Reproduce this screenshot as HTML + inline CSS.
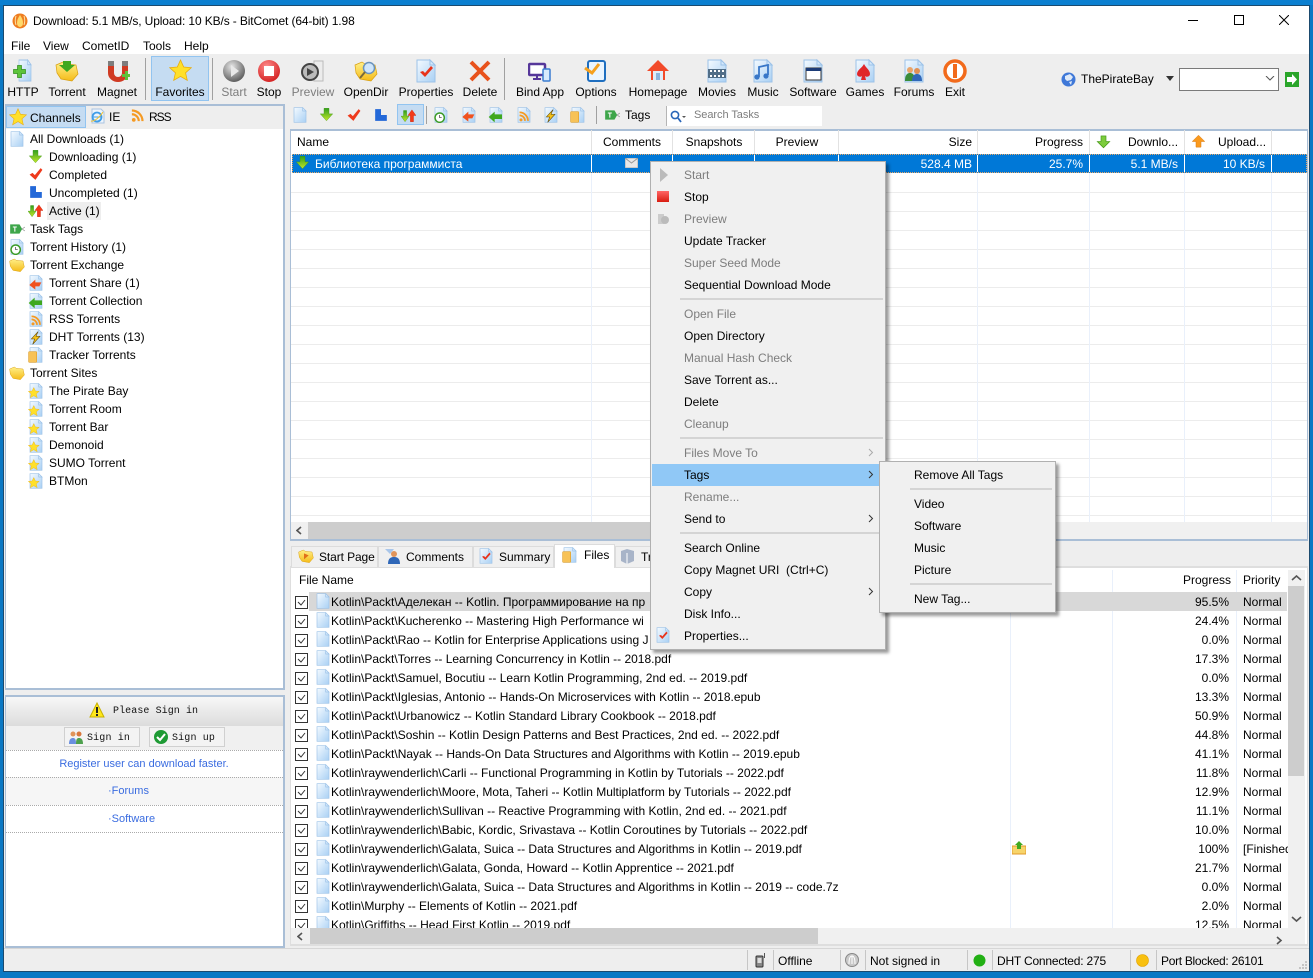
<!DOCTYPE html>
<html><head><meta charset="utf-8"><title>BitComet</title>
<style>
html,body{margin:0;padding:0;width:1313px;height:978px;overflow:hidden;background:#0a78c4;font:12px/16px "Liberation Sans","Noto Sans CJK SC",sans-serif;color:#000}
div,span,svg{box-sizing:border-box}
.a,.t,.c,.r,svg.i{position:absolute}
.t{white-space:nowrap}
.c{white-space:nowrap;transform:translateX(-50%)}
.r{white-space:nowrap;transform:translateX(-100%)}
.g{color:#7d7d7d}
.sp{position:absolute;background:#a0a0a0;width:1px}
.vl{position:absolute;width:1px;background:#e9f0fb}
.hd{position:absolute;width:1px;background:#e2e2e2;top:130px;height:25px}
.mi{position:absolute;left:34px;white-space:nowrap;line-height:16px}
.mg{color:#7d7d7d}
.ms{position:absolute;height:2px;background:#d4d4d4}
.row{position:relative;height:19px;white-space:nowrap;line-height:19px}
.row .n{position:absolute;left:41px;top:1px}
.row .p{position:absolute;right:59px;top:1px}
.row .q{position:absolute;left:953px;top:1px;width:45px;overflow:hidden}
.row svg{position:absolute}
.row .cb{left:5px;top:4px;width:13px;height:13px}
.row .dc{left:25px;top:1px;width:16px;height:16px}
.tb{position:absolute;top:546px;height:21px;background:#f0f0f0;border:1px solid #dcdcdc;border-bottom:0}
.mono{font:10px/16px "Liberation Mono","WenQuanYi Zen Hei",monospace;color:#111}
.lk{color:#3a6ce0;font-size:11px}
</style></head><body>
<svg width="0" height="0" style="position:absolute"><defs>
<linearGradient id="pg" x1="0" y1="0" x2="1" y2="1"><stop offset="0" stop-color="#f4faff"/><stop offset="1" stop-color="#a9d0f4"/></linearGradient>
<linearGradient id="fo" x1="0" y1="0" x2="0" y2="1"><stop offset="0" stop-color="#fff08a"/><stop offset="1" stop-color="#f5bb18"/></linearGradient>
<linearGradient id="gn" x1="0" y1="0" x2="0" y2="1"><stop offset="0" stop-color="#2f9e1e"/><stop offset="1" stop-color="#c4e826"/></linearGradient>
<radialGradient id="gb" cx=".4" cy=".3" r=".8"><stop offset="0" stop-color="#e5e5e5"/><stop offset="1" stop-color="#4c4c4c"/></radialGradient>
<radialGradient id="rb" cx=".4" cy=".3" r=".8"><stop offset="0" stop-color="#ff8d8d"/><stop offset="1" stop-color="#cf1414"/></radialGradient>
<symbol id="cb" viewBox="0 0 13 13"><rect x=".5" y=".5" width="12" height="12" fill="#fff" stroke="#333"/><path d="M3 6l3 3 4-5" stroke="#333" fill="none"/></symbol>
<symbol id="doc" viewBox="0 0 24 24"><path d="M3 1h13l5 5v17H3z" fill="url(#pg)" stroke="#9cc2e8"/><path d="M16 1v5h5z" fill="#d4e8fb" stroke="#9cc2e8"/></symbol>
<symbol id="dn" viewBox="0 0 24 24"><path d="M8 2h8v9h6L12 22 2 11h6z" fill="url(#gn)" stroke="#3f9410" stroke-width=".6"/></symbol>
<symbol id="up" viewBox="0 0 24 24"><path d="M8 21h8v-9h6L12 2 2 12h6z" fill="#f33a1a" stroke="#c7230c" stroke-width=".8"/></symbol>
<symbol id="upo" viewBox="0 0 24 24"><path d="M8 21h8v-9h6L12 2 2 12h6z" fill="#fa9a1e" stroke="#d97708" stroke-width=".8"/></symbol>
<symbol id="du" viewBox="0 0 24 24"><path d="M4 4h5v9h4L6.500 22 0 13h4z" fill="url(#gn)" stroke="#3f9410" stroke-width=".6"/><path d="M15 22h5v-10h4L17.500 3 11 12h4z" fill="#f33a1a" stroke="#c7230c" stroke-width=".6"/></symbol>
<symbol id="chk" viewBox="0 0 24 24"><path d="M1 13l5-3 4 4L20 2l3 3-12 17z" fill="#ee3a1c"/></symbol>
<symbol id="blk" viewBox="0 0 24 24"><path d="M2 2h10v10h10v10H2z" fill="#2368d8"/></symbol>
<symbol id="star" viewBox="0 0 24 24"><path d="M12 1l3.300 7.300 8 .8-6 5.300 1.800 7.900L12 18.200 4.900 22.300l1.800-7.900-6-5.300 8-.8z" fill="#ffe02a" stroke="#e8ac10" stroke-width=".8"/></symbol>
<symbol id="fold" viewBox="0 0 24 24"><path d="M1 6l7-3 3 2 10 1 2 9-6 7-11-2-4-6z" fill="url(#fo)" stroke="#d9a012" stroke-width=".7"/></symbol>
<symbol id="clk" viewBox="0 0 24 24"><use href="#doc"/><circle cx="10" cy="16" r="7" fill="#fff" stroke="#3a9a25" stroke-width="2.200"/><path d="M10 12v4h3" stroke="#333" fill="none"/></symbol>
<symbol id="rss" viewBox="0 0 24 24"><circle cx="6" cy="19" r="3" fill="#f59a23"/><path d="M3 10a11 11 0 0 1 11 11M3 4a17 17 0 0 1 17 17" fill="none" stroke="#f59a23" stroke-width="3.500"/></symbol>
<symbol id="tag" viewBox="0 0 24 24"><path d="M1 5h14l4 7-4 7H1z" fill="#3ea64a"/><path d="M5 9h6M8 9v7" stroke="#fff" stroke-width="1.600"/><path d="M19 12l4-3M19 12l4 3" stroke="#888"/></symbol>
<symbol id="dshare" viewBox="0 0 24 24"><use href="#doc"/><path d="M2 15l9-8v4h9l-3 6h-6v5z" fill="#f0521f"/></symbol>
<symbol id="dcoll" viewBox="0 0 24 24"><use href="#doc"/><path d="M1 15l9-8v4h11v7H10v5z" fill="#3fa81f"/></symbol>
<symbol id="drss" viewBox="0 0 24 24"><use href="#doc"/><g transform="translate(3,5) scale(.75)"><use href="#rss"/></g></symbol>
<symbol id="dbolt" viewBox="0 0 24 24"><use href="#doc"/><path d="M15 4L5 15h5l-3 8 11-12h-6z" fill="#f5c218" stroke="#5a4306" stroke-width=".8"/></symbol>
<symbol id="dfold" viewBox="0 0 24 24"><use href="#doc"/><rect x="1" y="7" width="12" height="16" rx="1" fill="#f7c257" stroke="#dfa02e"/></symbol>
<symbol id="dstar" viewBox="0 0 24 24"><use href="#doc"/><g transform="translate(0,6) scale(.72)"><use href="#star"/></g></symbol>
<symbol id="dprop" viewBox="0 0 24 24"><use href="#doc"/><path d="M6 13l3-1 2 2 6-7 2 2-8 9z" fill="#e8341c"/></symbol>
</defs></svg>

<!-- desktop / window -->
<div class="a" style="left:0;top:0;width:1313px;height:5px;background:#0b7fd0"></div>
<div class="a" style="left:3px;top:5px;width:1307px;height:967px;background:#eee;border:1px solid #1b4a6e"></div>
<div class="a" style="left:4px;top:6px;width:1305px;height:48px;background:#fff"></div>

<!-- title bar -->
<svg class="i" style="left:12px;top:13px" width="16" height="16" viewBox="0 0 16 16"><circle cx="8" cy="8" r="7.500" fill="#ef7d1f"/><path d="M8 2c2 3 3 5 3 8s-2 4-3 4-3-1-3-4 1-5 3-8z" fill="#ffd96a"/><path d="M4 3c-1 3-1 6 0 9M12 3c1 3 1 6 0 9" stroke="#f9e3a8" fill="none"/></svg>
<span class="t" style="left:33px;top:13px;letter-spacing:-.12px">Download: 5.1 MB/s, Upload: 10 KB/s - BitComet (64-bit) 1.98</span>
<div class="a" style="left:1188px;top:20px;width:10px;height:1px;background:#000"></div>
<div class="a" style="left:1234px;top:15px;width:10px;height:10px;border:1px solid #000"></div>
<svg class="i" style="left:1279px;top:15px" width="10" height="10" viewBox="0 0 10 10"><path d="M0 0l10 10M10 0L0 10" stroke="#000"/></svg>

<!-- menu -->
<span class="t" style="left:11px;top:38px">File</span>
<span class="t" style="left:43px;top:38px">View</span>
<span class="t" style="left:82px;top:38px">CometID</span>
<span class="t" style="left:143px;top:38px">Tools</span>
<span class="t" style="left:184px;top:38px">Help</span>

<!-- toolbar -->
<div class="a" style="left:151px;top:56px;width:58px;height:45px;background:#c5dcf2;border:1px solid #92c4f0"></div>
<div class="sp" style="left:145px;top:58px;height:42px"></div>
<div class="sp" style="left:212px;top:58px;height:42px"></div>
<div class="sp" style="left:504px;top:58px;height:42px"></div>

<svg class="i" style="left:17px;top:59px" width="16" height="23" viewBox="0 0 24 24" preserveAspectRatio="none"><use href="#doc"/></svg>
<svg class="i" style="left:13px;top:65px" width="13" height="13" viewBox="0 0 13 13"><path d="M4.500 .5h4v4h4v4h-4v4h-4v-4h-4v-4h4z" fill="#5cc33a" stroke="#2f8d1c" stroke-width=".7"/></svg>
<svg class="i" style="left:55px;top:59px" width="24" height="24" viewBox="0 0 24 24"><use href="#fold"/><path d="M8 2h8v4h4l-8 7-8-7h4z" fill="#3fa81f"/></svg>
<svg class="i" style="left:106px;top:59px" width="24" height="24" viewBox="0 0 24 24"><path d="M2 3h6v11a4 4 0 0 0 8 0V3h6v11a10 9 0 0 1-20 0z" fill="#d03a22"/><path d="M2 2h6v5H2zM16 2h6v5h-6z" fill="#7d7d7d"/><path d="M16 15h3v-3h3v3h2v3h-2v3h-3v-3h-3z" fill="#5cc33a"/></svg>
<svg class="i" style="left:169px;top:59px" width="23" height="23"><use href="#star"/></svg>
<svg class="i" style="left:222px;top:59px" width="24" height="24" viewBox="0 0 24 24"><circle cx="12" cy="12" r="11" fill="url(#gb)"/><path d="M9 6l8 6-8 6z" fill="#e8e8e8"/></svg>
<svg class="i" style="left:257px;top:59px" width="24" height="24" viewBox="0 0 24 24"><circle cx="12" cy="12" r="11" fill="url(#rb)"/><rect x="7" y="7" width="10" height="10" fill="#fff"/></svg>
<svg class="i" style="left:301px;top:59px" width="24" height="24" viewBox="0 0 24 24"><path d="M13 2h9v20h-9z" fill="#ececec" stroke="#bbb"/><circle cx="9" cy="13" r="8" fill="#bbb" stroke="#444" stroke-width="2"/><path d="M6 9l7 4-7 4z" fill="#444"/></svg>
<svg class="i" style="left:354px;top:59px" width="24" height="24" viewBox="0 0 24 24"><use href="#fold"/><circle cx="15" cy="9" r="5.500" fill="#cfe6fb" stroke="#6a93bd" stroke-width="1.500"/><path d="M11 13l-5 6" stroke="#7a6a3a" stroke-width="2"/></svg>
<svg class="i" style="left:414px;top:59px" width="24" height="24"><use href="#dprop"/></svg>
<svg class="i" style="left:468px;top:59px" width="24" height="24" viewBox="0 0 24 24"><path d="M3 3l18 18M21 3L3 21" stroke="#e8521c" stroke-width="4"/></svg>
<svg class="i" style="left:528px;top:62px" width="24" height="20" viewBox="0 0 24 20"><rect x="1" y="2" width="16" height="11" rx="1" fill="#fff" stroke="#56379a" stroke-width="2.500"/><path d="M5 17h8M9 13v4" stroke="#56379a" stroke-width="2"/><rect x="15" y="7" width="7" height="12" rx="1" fill="#d6eafc" stroke="#3a7cd0" stroke-width="1.500"/></svg>
<svg class="i" style="left:584px;top:59px" width="24" height="24" viewBox="0 0 24 24"><rect x="4" y="2" width="17" height="20" rx="2" fill="#eaf5ff" stroke="#1f6fc0" stroke-width="2"/><path d="M1 9l7 5 7-9" fill="none" stroke="#f5a11f" stroke-width="3"/></svg>
<svg class="i" style="left:646px;top:58px" width="24" height="24" viewBox="0 0 24 24"><path d="M12 2L1 13h4v9h14v-9h4z" fill="#f24a2a"/><path d="M7 13h10v9H7z" fill="#dfecf9"/><path d="M10 15h4v7h-4z" fill="#8bb4de"/></svg>
<svg class="i" style="left:705px;top:59px" width="24" height="24"><use href="#doc"/><rect x="3" y="10" width="18" height="9" fill="#516e88"/><path d="M5 11h2v2H5zM9 11h2v2H9zM13 11h2v2h-2zM17 11h2v2h-2zM5 16h2v2H5zM9 16h2v2H9zM13 16h2v2h-2zM17 16h2v2h-2z" fill="#fff"/></svg>
<svg class="i" style="left:751px;top:59px" width="24" height="24"><use href="#doc"/><path d="M8 18V8l9-2v10" fill="none" stroke="#3877c8" stroke-width="1.800"/><circle cx="6" cy="18" r="2.600" fill="#3877c8"/><circle cx="15" cy="17" r="2.600" fill="#3877c8"/></svg>
<svg class="i" style="left:801px;top:59px" width="24" height="24"><use href="#doc"/><rect x="5" y="9" width="15" height="12" fill="#fff" stroke="#333"/><rect x="5" y="9" width="15" height="3" fill="#1c3c78"/></svg>
<svg class="i" style="left:853px;top:59px" width="24" height="24"><use href="#doc"/><path d="M11 5c2 4 6 6 6 10a3 3 0 0 1-5 2l1 4h-5l1-4a3 3 0 0 1-5-2c0-4 5-6 7-10z" fill="#e0262a"/></svg>
<svg class="i" style="left:902px;top:59px" width="24" height="24"><use href="#doc"/><circle cx="8" cy="11" r="3" fill="#e9a56a"/><path d="M3 22c0-7 3-8 5-8s5 1 5 8z" fill="#3a8c3a"/><circle cx="15" cy="12" r="3" fill="#e09055"/><path d="M10 22c0-6 3-7 5-7s5 1 5 7z" fill="#2f67b8"/></svg>
<svg class="i" style="left:943px;top:59px" width="24" height="24" viewBox="0 0 24 24"><circle cx="12" cy="12" r="10" fill="#fff" stroke="#f26a1b" stroke-width="3.500"/><rect x="10" y="5" width="4" height="14" fill="#f26a1b"/></svg>

<span class="c" style="left:23px;top:84px">HTTP</span>
<span class="c" style="left:67px;top:84px">Torrent</span>
<span class="c" style="left:117px;top:84px">Magnet</span>
<span class="c" style="left:180px;top:84px">Favorites</span>
<span class="c g" style="left:234px;top:84px">Start</span>
<span class="c" style="left:269px;top:84px">Stop</span>
<span class="c g" style="left:313px;top:84px">Preview</span>
<span class="c" style="left:366px;top:84px">OpenDir</span>
<span class="c" style="left:426px;top:84px">Properties</span>
<span class="c" style="left:480px;top:84px">Delete</span>
<span class="c" style="left:540px;top:84px">Bind App</span>
<span class="c" style="left:596px;top:84px">Options</span>
<span class="c" style="left:658px;top:84px">Homepage</span>
<span class="c" style="left:717px;top:84px">Movies</span>
<span class="c" style="left:763px;top:84px">Music</span>
<span class="c" style="left:813px;top:84px">Software</span>
<span class="c" style="left:865px;top:84px">Games</span>
<span class="c" style="left:914px;top:84px">Forums</span>
<span class="c" style="left:955px;top:84px">Exit</span>

<svg class="i" style="left:1061px;top:72px" width="15" height="15" viewBox="0 0 15 15"><circle cx="7.500" cy="7.500" r="7" fill="#3f78d8"/><path d="M4 4l5-2 3 3-2 3-4 1-2-2zM8 10l3-1-1 4z" fill="#dfeaf8"/></svg>
<span class="t" style="left:1081px;top:71px">ThePirateBay</span>
<svg class="i" style="left:1166px;top:76px" width="9" height="6"><path d="M0 0h8L4 5z" fill="#333"/></svg>
<div class="a" style="left:1179px;top:68px;width:100px;height:23px;background:#fff;border:1px solid #7a7a7a"></div>
<svg class="i" style="left:1265px;top:76px" width="10" height="6"><path d="M1 0l4 4 4-4" stroke="#555" fill="none"/></svg>
<svg class="i" style="left:1285px;top:72px" width="14" height="15" viewBox="0 0 14 15"><rect width="14" height="15" fill="#2aa52a"/><path d="M2 5h5V2l5 5.500L7 13v-3H2z" fill="#fff"/></svg>

<!-- second toolbar -->
<div class="a" style="left:397px;top:104px;width:27px;height:21px;background:#c5dcf2;border:1px solid #92c4f0"></div>
<svg class="i" style="left:292px;top:107px" width="16" height="16"><use href="#doc"/></svg>
<svg class="i" style="left:319px;top:107px" width="15" height="15" viewBox="0 0 24 24"><use href="#dn"/></svg>
<svg class="i" style="left:347px;top:108px" width="14" height="14" viewBox="0 0 24 24"><use href="#chk"/></svg>
<svg class="i" style="left:374px;top:108px" width="14" height="14" viewBox="0 0 24 24"><use href="#blk"/></svg>
<svg class="i" style="left:401px;top:108px" width="15" height="15" viewBox="0 0 24 24"><use href="#du"/></svg>
<div class="sp" style="left:426px;top:106px;height:18px"></div>
<svg class="i" style="left:433px;top:107px" width="16" height="16" viewBox="0 0 24 24"><use href="#clk"/></svg>
<svg class="i" style="left:461px;top:107px" width="16" height="16" viewBox="0 0 24 24"><use href="#dshare"/></svg>
<svg class="i" style="left:488px;top:107px" width="16" height="16" viewBox="0 0 24 24"><use href="#dcoll"/></svg>
<svg class="i" style="left:516px;top:107px" width="16" height="16" viewBox="0 0 24 24"><use href="#drss"/></svg>
<svg class="i" style="left:543px;top:107px" width="16" height="16" viewBox="0 0 24 24"><use href="#dbolt"/></svg>
<svg class="i" style="left:570px;top:107px" width="16" height="16" viewBox="0 0 24 24"><use href="#dfold"/></svg>
<div class="sp" style="left:596px;top:106px;height:18px"></div>
<svg class="i" style="left:604px;top:107px" width="17" height="16" viewBox="0 0 24 24"><use href="#tag"/></svg>
<span class="t" style="left:625px;top:107px">Tags</span>
<div class="a" style="left:666px;top:106px;width:156px;height:20px;background:#fff;border-left:1px solid #b5b5b5"></div>
<svg class="i" style="left:670px;top:110px" width="16" height="14" viewBox="0 0 16 14"><circle cx="5" cy="5" r="3.600" fill="none" stroke="#2a66b8" stroke-width="1.600"/><path d="M8 8l3 4" stroke="#2a66b8" stroke-width="1.800"/><path d="M12 6h4l-2 2z" fill="#555"/></svg>
<span class="t g" style="left:694px;top:107px;font-size:11px;letter-spacing:-.05px">Search Tasks</span>

<!-- left channels panel -->
<div class="a" style="left:5px;top:104px;width:280px;height:586px;background:#fff;border:2px solid #a9bed6;border-left-width:1px"></div>
<div class="a" style="left:6px;top:106px;width:277px;height:23px;background:#eee"></div>
<div class="a" style="left:6px;top:106px;width:80px;height:22px;background:#c5dcf2;border:1px solid #92c4f0"></div>
<svg class="i" style="left:9px;top:108px" width="18" height="18"><use href="#star"/></svg>
<span class="t" style="left:30px;top:110px">Channels</span>
<svg class="i" style="left:90px;top:108px" width="16" height="16" viewBox="0 0 16 16"><path d="M2 1h9l3 3v11H2z" fill="#eef5fc" stroke="#a9c4e2"/><circle cx="7" cy="9" r="4.500" fill="none" stroke="#3f9de8" stroke-width="1.800"/><path d="M3 9h8" stroke="#3f9de8"/><path d="M1 13c3 1 9-4 12-9" stroke="#f2c230" fill="none"/></svg>
<span class="t" style="left:109px;top:109px">IE</span>
<svg class="i" style="left:130px;top:108px" width="15" height="15" viewBox="0 0 24 24"><use href="#rss"/></svg>
<span class="t" style="left:149px;top:109px;letter-spacing:-1px">RSS</span>

<svg class="i" style="left:9px;top:131px" width="16" height="16" viewBox="0 0 24 24"><use href="#doc"/></svg><span class="t" style="left:30px;top:131px">All Downloads (1)</span>
<svg class="i" style="left:28px;top:149px" width="15" height="15" viewBox="0 0 24 24"><use href="#dn"/></svg><span class="t" style="left:49px;top:149px">Downloading (1)</span>
<svg class="i" style="left:29px;top:167px" width="14" height="14" viewBox="0 0 24 24"><use href="#chk"/></svg><span class="t" style="left:49px;top:167px">Completed</span>
<svg class="i" style="left:29px;top:185px" width="14" height="14" viewBox="0 0 24 24"><use href="#blk"/></svg><span class="t" style="left:49px;top:185px">Uncompleted (1)</span>
<div class="a" style="left:47px;top:202px;width:54px;height:18px;background:#eeeeee"></div>
<svg class="i" style="left:28px;top:203px" width="15" height="15" viewBox="0 0 24 24"><use href="#du"/></svg><span class="t" style="left:49px;top:203px">Active (1)</span>
<svg class="i" style="left:9px;top:221px" width="17" height="16" viewBox="0 0 24 24"><use href="#tag"/></svg><span class="t" style="left:30px;top:221px">Task Tags</span>
<svg class="i" style="left:9px;top:239px" width="16" height="16" viewBox="0 0 24 24"><use href="#clk"/></svg><span class="t" style="left:30px;top:239px">Torrent History (1)</span>
<svg class="i" style="left:9px;top:257px" width="16" height="16" viewBox="0 0 24 24"><use href="#fold"/></svg><span class="t" style="left:30px;top:257px">Torrent Exchange</span>
<svg class="i" style="left:28px;top:275px" width="16" height="16" viewBox="0 0 24 24"><use href="#dshare"/></svg><span class="t" style="left:49px;top:275px">Torrent Share (1)</span>
<svg class="i" style="left:28px;top:293px" width="16" height="16" viewBox="0 0 24 24"><use href="#dcoll"/></svg><span class="t" style="left:49px;top:293px">Torrent Collection</span>
<svg class="i" style="left:28px;top:311px" width="16" height="16" viewBox="0 0 24 24"><use href="#drss"/></svg><span class="t" style="left:49px;top:311px">RSS Torrents</span>
<svg class="i" style="left:28px;top:329px" width="16" height="16" viewBox="0 0 24 24"><use href="#dbolt"/></svg><span class="t" style="left:49px;top:329px">DHT Torrents (13)</span>
<svg class="i" style="left:28px;top:347px" width="16" height="16" viewBox="0 0 24 24"><use href="#dfold"/></svg><span class="t" style="left:49px;top:347px">Tracker Torrents</span>
<svg class="i" style="left:9px;top:365px" width="16" height="16" viewBox="0 0 24 24"><use href="#fold"/></svg><span class="t" style="left:30px;top:365px">Torrent Sites</span>
<svg class="i" style="left:28px;top:383px" width="16" height="16" viewBox="0 0 24 24"><use href="#dstar"/></svg><span class="t" style="left:49px;top:383px">The Pirate Bay</span>
<svg class="i" style="left:28px;top:401px" width="16" height="16" viewBox="0 0 24 24"><use href="#dstar"/></svg><span class="t" style="left:49px;top:401px">Torrent Room</span>
<svg class="i" style="left:28px;top:419px" width="16" height="16" viewBox="0 0 24 24"><use href="#dstar"/></svg><span class="t" style="left:49px;top:419px">Torrent Bar</span>
<svg class="i" style="left:28px;top:437px" width="16" height="16" viewBox="0 0 24 24"><use href="#dstar"/></svg><span class="t" style="left:49px;top:437px">Demonoid</span>
<svg class="i" style="left:28px;top:455px" width="16" height="16" viewBox="0 0 24 24"><use href="#dstar"/></svg><span class="t" style="left:49px;top:455px">SUMO Torrent</span>
<svg class="i" style="left:28px;top:473px" width="16" height="16" viewBox="0 0 24 24"><use href="#dstar"/></svg><span class="t" style="left:49px;top:473px">BTMon</span>

<!-- sign in panel -->
<div class="a" style="left:5px;top:695px;width:280px;height:253px;background:#fff;border:2px solid #a9bed6;border-left-width:1px"></div>
<div class="a" style="left:6px;top:697px;width:277px;height:29px;background:linear-gradient(#f7f7f7,#dcdcdc)"></div>
<div class="a" style="left:6px;top:726px;width:277px;height:24px;background:#f0f0f0"></div>
<svg class="i" style="left:89px;top:702px" width="16" height="16" viewBox="0 0 16 16"><path d="M8 1l7 14H1z" fill="#ffe81a" stroke="#c7b000"/><path d="M7 5h2v6H7zM7 12h2v2H7z" fill="#222"/></svg>
<span class="t mono" style="left:113px;top:704px;letter-spacing:.08px">Please Sign in</span>
<div class="a" style="left:64px;top:727px;width:76px;height:20px;background:#f3f3f3;border:1px solid #d0d0d0"></div>
<div class="a" style="left:149px;top:727px;width:76px;height:20px;background:#f3f3f3;border:1px solid #d0d0d0"></div>
<svg class="i" style="left:69px;top:731px" width="14" height="13" viewBox="0 0 14 13"><circle cx="4" cy="3" r="2.500" fill="#e0945a"/><path d="M0 13c0-5 2-6 4-6s3 1 3 6z" fill="#6a8fe0"/><circle cx="10" cy="3" r="2.500" fill="#d9773c"/><path d="M7 13c0-5 1-6 3-6s4 1 4 6z" fill="#4da04d"/></svg>
<svg class="i" style="left:154px;top:730px" width="14" height="14" viewBox="0 0 14 14"><circle cx="7" cy="7" r="7" fill="#1e9a34"/><path d="M3 7l3 3 5-6" stroke="#fff" stroke-width="2" fill="none"/></svg>
<span class="t mono" style="left:87px;top:731px;letter-spacing:.15px">Sign in</span>
<span class="t mono" style="left:172px;top:731px;letter-spacing:.15px">Sign up</span>
<div class="a" style="left:6px;top:750px;width:277px;border-top:1px dotted #aaa"></div>
<span class="c lk" style="left:144px;top:756px">Register user can download faster.</span>
<div class="a" style="left:6px;top:777px;width:277px;height:28px;background:#f6f6f6;border-top:1px dotted #aaa"></div>
<span class="t lk" style="left:108px;top:783px">·Forums</span>
<div class="a" style="left:6px;top:805px;width:277px;border-top:1px dotted #aaa"></div>
<span class="t lk" style="left:108px;top:811px">·Software</span>
<div class="a" style="left:6px;top:832px;width:277px;border-top:1px dotted #aaa"></div>

<!-- task list -->
<div class="a" style="left:290px;top:129px;width:1018px;height:412px;background:#fff;border:2px solid #a9bed6;border-left-width:1px;border-right-width:1px"></div>
<div class="a" style="left:291px;top:174px;width:1016px;height:348px;background:repeating-linear-gradient(#fff 0,#fff 18px,#ececec 18px,#ececec 19px)"></div>
<div class="vl" style="left:591px;top:155px;height:367px"></div><div class="vl" style="left:672px;top:155px;height:367px"></div><div class="vl" style="left:754px;top:155px;height:367px"></div><div class="vl" style="left:838px;top:155px;height:367px"></div><div class="vl" style="left:977px;top:155px;height:367px"></div><div class="vl" style="left:1089px;top:155px;height:367px"></div><div class="vl" style="left:1184px;top:155px;height:367px"></div><div class="vl" style="left:1271px;top:155px;height:367px"></div>
<div class="hd" style="left:591px"></div><div class="hd" style="left:672px"></div><div class="hd" style="left:754px"></div><div class="hd" style="left:838px"></div><div class="hd" style="left:977px"></div><div class="hd" style="left:1089px"></div><div class="hd" style="left:1184px"></div><div class="hd" style="left:1271px"></div>
<span class="t" style="left:297px;top:134px">Name</span>
<span class="c" style="left:632px;top:134px">Comments</span>
<span class="c" style="left:714px;top:134px">Snapshots</span>
<span class="c" style="left:797px;top:134px">Preview</span>
<span class="r" style="left:972px;top:134px">Size</span>
<span class="r" style="left:1083px;top:134px">Progress</span>
<svg class="i" style="left:1096px;top:134px" width="15" height="15" viewBox="0 0 24 24"><path d="M8 3h8v9h6L12 22 2 12h6z" fill="#7ccb3c" stroke="#3f9410"/></svg>
<span class="t" style="left:1128px;top:134px">Downlo...</span>
<svg class="i" style="left:1191px;top:134px" width="15" height="15" viewBox="0 0 24 24"><use href="#upo"/></svg>
<span class="t" style="left:1218px;top:134px">Upload...</span>
<div class="a" style="left:292px;top:154px;width:1015px;height:19px;background:#0078d7;border:1px dotted #e8a868"></div>
<div class="vl" style="left:591px;top:155px;height:17px;background:#fff"></div><div class="vl" style="left:672px;top:155px;height:17px;background:#fff"></div><div class="vl" style="left:754px;top:155px;height:17px;background:#fff"></div><div class="vl" style="left:838px;top:155px;height:17px;background:#fff"></div><div class="vl" style="left:977px;top:155px;height:17px;background:#fff"></div><div class="vl" style="left:1089px;top:155px;height:17px;background:#fff"></div><div class="vl" style="left:1184px;top:155px;height:17px;background:#fff"></div><div class="vl" style="left:1271px;top:155px;height:17px;background:#fff"></div>
<svg class="i" style="left:295px;top:155px" width="15" height="15" viewBox="0 0 24 24"><use href="#dn"/></svg>
<span class="t" style="left:315px;top:156px;color:#fff">Библиотека программиста</span>
<svg class="i" style="left:625px;top:158px" width="13" height="10" viewBox="0 0 13 10"><rect width="13" height="10" fill="#e8e8e8" stroke="#aaa"/><path d="M0 0l6.500 5L13 0" fill="none" stroke="#999"/></svg>
<span class="r" style="left:972px;top:156px;color:#fff">528.4 MB</span>
<span class="r" style="left:1083px;top:156px;color:#fff">25.7%</span>
<span class="r" style="left:1178px;top:156px;color:#fff">5.1 MB/s</span>
<span class="r" style="left:1265px;top:156px;color:#fff">10 KB/s</span>
<div class="a" style="left:291px;top:522px;width:1016px;height:17px;background:#f0f0f0"></div>
<div class="a" style="left:308px;top:522px;width:510px;height:17px;background:#cdcdcd"></div>
<svg class="i" style="left:296px;top:526px" width="7" height="9"><path d="M5 1L1 4.500 5 8" stroke="#555" stroke-width="1.600" fill="none"/></svg>

<!-- bottom tabs -->
<div class="a" style="left:290px;top:566px;width:1018px;height:380px;background:#fff;border:2px solid #dedede;border-left-width:1px;border-right-width:1px"></div>
<div class="tb" style="left:291px;width:87px"></div>
<div class="tb" style="left:378px;width:95px"></div>
<div class="tb" style="left:473px;width:81px"></div>
<div class="tb" style="left:615px;width:40px"></div>
<div class="tb" style="left:554px;top:544px;height:24px;width:61px;background:#fff"></div>
<svg class="i" style="left:298px;top:548px" width="16" height="16" viewBox="0 0 24 24"><use href="#fold"/><path d="M9 8l7 3-7 6z" fill="#e0701a"/></svg>
<span class="t" style="left:319px;top:549px;letter-spacing:-.1px">Start Page</span>
<svg class="i" style="left:384px;top:548px" width="17" height="16" viewBox="0 0 17 16"><path d="M1 1h9L6 6z" fill="#a9c6ea"/><circle cx="10" cy="6" r="3" fill="#e0945a"/><path d="M4 16c0-6 3-7 6-7s6 1 6 7z" fill="#2f67b8"/></svg>
<span class="t" style="left:406px;top:549px">Comments</span>
<svg class="i" style="left:478px;top:548px" width="16" height="16" viewBox="0 0 24 24"><use href="#dprop"/></svg>
<span class="t" style="left:499px;top:549px">Summary</span>
<svg class="i" style="left:562px;top:547px" width="16" height="16" viewBox="0 0 24 24"><use href="#dfold"/></svg>
<span class="t" style="left:584px;top:547px">Files</span>
<svg class="i" style="left:620px;top:548px" width="15" height="16" viewBox="0 0 15 16"><path d="M1 3l6-2 7 2v10l-7 3-6-3z" fill="#a8b4c8"/><path d="M7 5v11" stroke="#fff"/></svg>
<span class="t" style="left:641px;top:549px">Tr</span>

<!-- file list -->
<div class="vl" style="left:1010px;top:592px;height:336px"></div>
<div class="vl" style="left:1112px;top:570px;height:358px"></div>
<div class="vl" style="left:1236px;top:570px;height:358px"></div>
<span class="t" style="left:299px;top:572px">File Name</span>
<span class="r" style="left:1231px;top:572px">Progress</span>
<span class="t" style="left:1243px;top:572px">Priority</span>
<div class="a" style="left:290px;top:592px;width:998px;height:336px;overflow:hidden">
<div class="a" style="left:19px;top:0;width:978px;height:19px;background:#d8d8d8"></div>
<div style="position:absolute;left:0;top:0;width:998px">
<div class="row"><svg class="cb"><use href="#cb"/></svg><svg class="dc"><use href="#doc"/></svg><span class="n">Kotlin\Packt\Аделекан -- Kotlin. Программирование на пр</span><span class="p">95.5%</span><span class="q">Normal</span></div>
<div class="row"><svg class="cb"><use href="#cb"/></svg><svg class="dc"><use href="#doc"/></svg><span class="n">Kotlin\Packt\Kucherenko -- Mastering High Performance wi</span><span class="p">24.4%</span><span class="q">Normal</span></div>
<div class="row"><svg class="cb"><use href="#cb"/></svg><svg class="dc"><use href="#doc"/></svg><span class="n">Kotlin\Packt\Rao -- Kotlin for Enterprise Applications using J</span><span class="p">0.0%</span><span class="q">Normal</span></div>
<div class="row"><svg class="cb"><use href="#cb"/></svg><svg class="dc"><use href="#doc"/></svg><span class="n">Kotlin\Packt\Torres -- Learning Concurrency in Kotlin -- 2018.pdf</span><span class="p">17.3%</span><span class="q">Normal</span></div>
<div class="row"><svg class="cb"><use href="#cb"/></svg><svg class="dc"><use href="#doc"/></svg><span class="n">Kotlin\Packt\Samuel, Bocutiu -- Learn Kotlin Programming, 2nd ed. -- 2019.pdf</span><span class="p">0.0%</span><span class="q">Normal</span></div>
<div class="row"><svg class="cb"><use href="#cb"/></svg><svg class="dc"><use href="#doc"/></svg><span class="n">Kotlin\Packt\Iglesias, Antonio -- Hands-On Microservices with Kotlin -- 2018.epub</span><span class="p">13.3%</span><span class="q">Normal</span></div>
<div class="row"><svg class="cb"><use href="#cb"/></svg><svg class="dc"><use href="#doc"/></svg><span class="n">Kotlin\Packt\Urbanowicz -- Kotlin Standard Library Cookbook -- 2018.pdf</span><span class="p">50.9%</span><span class="q">Normal</span></div>
<div class="row"><svg class="cb"><use href="#cb"/></svg><svg class="dc"><use href="#doc"/></svg><span class="n">Kotlin\Packt\Soshin -- Kotlin Design Patterns and Best Practices, 2nd ed. -- 2022.pdf</span><span class="p">44.8%</span><span class="q">Normal</span></div>
<div class="row"><svg class="cb"><use href="#cb"/></svg><svg class="dc"><use href="#doc"/></svg><span class="n">Kotlin\Packt\Nayak -- Hands-On Data Structures and Algorithms with Kotlin -- 2019.epub</span><span class="p">41.1%</span><span class="q">Normal</span></div>
<div class="row"><svg class="cb"><use href="#cb"/></svg><svg class="dc"><use href="#doc"/></svg><span class="n">Kotlin\raywenderlich\Carli -- Functional Programming in Kotlin by Tutorials -- 2022.pdf</span><span class="p">11.8%</span><span class="q">Normal</span></div>
<div class="row"><svg class="cb"><use href="#cb"/></svg><svg class="dc"><use href="#doc"/></svg><span class="n">Kotlin\raywenderlich\Moore, Mota, Taheri -- Kotlin Multiplatform by Tutorials -- 2022.pdf</span><span class="p">12.9%</span><span class="q">Normal</span></div>
<div class="row"><svg class="cb"><use href="#cb"/></svg><svg class="dc"><use href="#doc"/></svg><span class="n">Kotlin\raywenderlich\Sullivan -- Reactive Programming with Kotlin, 2nd ed. -- 2021.pdf</span><span class="p">11.1%</span><span class="q">Normal</span></div>
<div class="row"><svg class="cb"><use href="#cb"/></svg><svg class="dc"><use href="#doc"/></svg><span class="n">Kotlin\raywenderlich\Babic, Kordic, Srivastava -- Kotlin Coroutines by Tutorials -- 2022.pdf</span><span class="p">10.0%</span><span class="q">Normal</span></div>
<div class="row"><svg class="cb"><use href="#cb"/></svg><svg class="dc"><use href="#doc"/></svg><span class="n">Kotlin\raywenderlich\Galata, Suica -- Data Structures and Algorithms in Kotlin -- 2019.pdf</span><svg style="left:722px;top:2px" width="14" height="14" viewBox="0 0 14 14"><rect y="5" width="14" height="8" fill="#f7d46a" stroke="#e09a2a"/><path d="M7 0l4 4H9v4H5V4H3z" fill="#3fa81f"/></svg><span class="p">100%</span><span class="q">[Finished</span></div>
<div class="row"><svg class="cb"><use href="#cb"/></svg><svg class="dc"><use href="#doc"/></svg><span class="n">Kotlin\raywenderlich\Galata, Gonda, Howard -- Kotlin Apprentice -- 2021.pdf</span><span class="p">21.7%</span><span class="q">Normal</span></div>
<div class="row"><svg class="cb"><use href="#cb"/></svg><svg class="dc"><use href="#doc"/></svg><span class="n">Kotlin\raywenderlich\Galata, Suica -- Data Structures and Algorithms in Kotlin -- 2019 -- code.7z</span><span class="p">0.0%</span><span class="q">Normal</span></div>
<div class="row"><svg class="cb"><use href="#cb"/></svg><svg class="dc"><use href="#doc"/></svg><span class="n">Kotlin\Murphy -- Elements of Kotlin -- 2021.pdf</span><span class="p">2.0%</span><span class="q">Normal</span></div>
<div class="row"><svg class="cb"><use href="#cb"/></svg><svg class="dc"><use href="#doc"/></svg><span class="n">Kotlin\Griffiths -- Head First Kotlin -- 2019.pdf</span><span class="p">12.5%</span><span class="q">Normal</span></div>
</div></div>
<!-- scrollbars -->
<div class="a" style="left:1288px;top:570px;width:17px;height:358px;background:#f0f0f0"></div>
<div class="a" style="left:1288px;top:586px;width:16px;height:190px;background:#cdcdcd"></div>
<svg class="i" style="left:1291px;top:575px" width="11" height="7"><path d="M1 5l4.500-4L10 5" stroke="#555" stroke-width="1.600" fill="none"/></svg>
<svg class="i" style="left:1291px;top:916px" width="11" height="7"><path d="M1 1l4.500 4L10 1" stroke="#555" stroke-width="1.600" fill="none"/></svg>
<div class="a" style="left:291px;top:928px;width:1014px;height:16px;background:#f0f0f0"></div>
<div class="a" style="left:310px;top:928px;width:508px;height:16px;background:#cdcdcd"></div>
<svg class="i" style="left:297px;top:932px" width="7" height="9"><path d="M5 1L1 4.500 5 8" stroke="#555" stroke-width="1.600" fill="none"/></svg>
<svg class="i" style="left:1276px;top:936px" width="7" height="9"><path d="M1 1l4 3.500L1 8" stroke="#555" stroke-width="1.600" fill="none"/></svg>

<!-- status bar -->
<div class="a" style="left:4px;top:948px;width:1305px;height:1px;background:#d6d6d6"></div>
<div class="sp" style="left:747px;top:950px;height:20px;background:#c6c6c6"></div><div class="sp" style="left:773px;top:950px;height:20px;background:#c6c6c6"></div><div class="sp" style="left:840px;top:950px;height:20px;background:#c6c6c6"></div><div class="sp" style="left:865px;top:950px;height:20px;background:#c6c6c6"></div><div class="sp" style="left:967px;top:950px;height:20px;background:#c6c6c6"></div><div class="sp" style="left:992px;top:950px;height:20px;background:#c6c6c6"></div><div class="sp" style="left:1130px;top:950px;height:20px;background:#c6c6c6"></div><div class="sp" style="left:1156px;top:950px;height:20px;background:#c6c6c6"></div>
<svg class="i" style="left:755px;top:953px" width="11" height="15" viewBox="0 0 11 15"><rect x="1" y="3" width="7" height="11" rx="1" fill="#888" stroke="#333"/><rect x="2.500" y="5" width="4" height="5" fill="#ddd"/><path d="M9.500 0v5" stroke="#555"/></svg>
<span class="t" style="left:778px;top:953px">Offline</span>
<svg class="i" style="left:845px;top:953px" width="14" height="14" viewBox="0 0 14 14"><circle cx="7" cy="7" r="6.500" fill="#c8c8c8" stroke="#888"/><path d="M4 11C4 6 5 3 7 3s3 3 3 8M7 3v8" stroke="#fff" fill="none"/></svg>
<span class="t" style="left:870px;top:953px">Not signed in</span>
<svg class="i" style="left:973px;top:954px" width="13" height="13"><circle cx="6.500" cy="6.500" r="6" fill="#22b014"/></svg>
<span class="t" style="left:997px;top:953px;letter-spacing:-.2px">DHT Connected: 275</span>
<svg class="i" style="left:1136px;top:954px" width="13" height="13"><circle cx="6.500" cy="6.500" r="6" fill="#f8c010" stroke="#e0a000" stroke-width=".6"/></svg>
<span class="t" style="left:1161px;top:953px;letter-spacing:-.3px">Port Blocked: 26101</span>
<svg class="i" style="left:1298px;top:960px" width="10" height="10"><path d="M7 1h2v2H7zM4 4h2v2H4zM7 4h2v2H7zM1 7h2v2H1zM4 7h2v2H4zM7 7h2v2H7z" fill="#c4c4c4"/></svg>

<!-- context menu -->
<div class="a" style="left:650px;top:161px;width:236px;height:489px;background:#f0f0f0;border:1px solid #b0b0b0;box-shadow:3px 3px 3px rgba(0,0,0,.4)"></div>
<div class="a" style="left:652px;top:464px;width:228px;height:22px;background:#90c8f6"></div>
<div class="a" style="left:650px;top:161px;width:0;height:0">
<svg class="i" style="left:9px;top:6px" width="12" height="16"><path d="M1 1l8 7-8 7z" fill="#bbb"/></svg>
<div class="a" style="left:7px;top:30px;width:12px;height:11px;background:linear-gradient(#f66,#d81c10)"></div>
<svg class="i" style="left:7px;top:52px" width="13" height="12" viewBox="0 0 13 12"><path d="M1 1h6v10H1z" fill="#ccc"/><circle cx="8" cy="7" r="4" fill="#bbb"/></svg>
<svg class="i" style="left:5px;top:466px" width="16" height="16" viewBox="0 0 24 24"><use href="#dprop"/></svg>
<span class="mi mg" style="top:6px">Start</span>
<span class="mi" style="top:28px">Stop</span>
<span class="mi mg" style="top:50px">Preview</span>
<span class="mi" style="top:72px">Update Tracker</span>
<span class="mi mg" style="top:94px">Super Seed Mode</span>
<span class="mi" style="top:116px">Sequential Download Mode</span>
<div class="ms" style="left:30px;top:137px;width:203px"></div>
<span class="mi mg" style="top:145px">Open File</span>
<span class="mi" style="top:167px">Open Directory</span>
<span class="mi mg" style="top:189px">Manual Hash Check</span>
<span class="mi" style="top:211px">Save Torrent as...</span>
<span class="mi" style="top:233px">Delete</span>
<span class="mi mg" style="top:255px">Cleanup</span>
<div class="ms" style="left:30px;top:276px;width:203px"></div>
<span class="mi mg" style="top:284px">Files Move To</span>
<span class="mi" style="top:306px">Tags</span>
<span class="mi mg" style="top:328px">Rename...</span>
<span class="mi" style="top:350px">Send to</span>
<div class="ms" style="left:30px;top:371px;width:203px"></div>
<span class="mi" style="top:379px">Search Online</span>
<span class="mi" style="top:401px">Copy Magnet URI &nbsp;(Ctrl+C)</span>
<span class="mi" style="top:423px">Copy</span>
<span class="mi" style="top:445px">Disk Info...</span>
<span class="mi" style="top:467px">Properties...</span>
<svg class="i" style="left:218px;top:287px" width="6" height="9"><path d="M1 1l3.500 3.500L1 8" stroke="#aaa" fill="none"/></svg>
<svg class="i" style="left:218px;top:309px" width="6" height="9"><path d="M1 1l3.500 3.500L1 8" stroke="#333" fill="none"/></svg>
<svg class="i" style="left:218px;top:353px" width="6" height="9"><path d="M1 1l3.500 3.500L1 8" stroke="#333" fill="none"/></svg>
<svg class="i" style="left:218px;top:426px" width="6" height="9"><path d="M1 1l3.500 3.500L1 8" stroke="#333" fill="none"/></svg>
</div>

<!-- submenu -->
<div class="a" style="left:879px;top:461px;width:177px;height:152px;background:#f0f0f0;border:1px solid #b0b0b0;box-shadow:3px 3px 3px rgba(0,0,0,.4)"></div>
<div class="a" style="left:880px;top:462px;width:0;height:0">
<span class="mi" style="top:5px">Remove All Tags</span>
<div class="ms" style="left:30px;top:26px;width:142px"></div>
<span class="mi" style="top:34px">Video</span>
<span class="mi" style="top:56px">Software</span>
<span class="mi" style="top:78px">Music</span>
<span class="mi" style="top:100px">Picture</span>
<div class="ms" style="left:30px;top:121px;width:142px"></div>
<span class="mi" style="top:129px">New Tag...</span>
</div>
</body></html>
